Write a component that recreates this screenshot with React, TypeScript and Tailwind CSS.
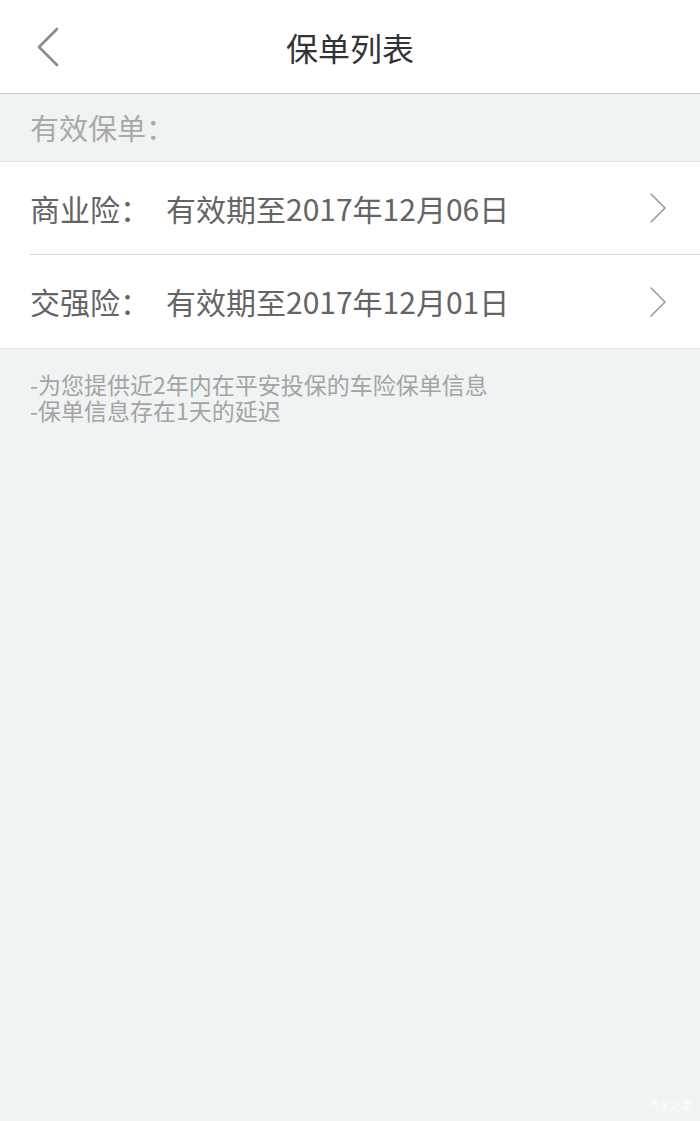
const policies = [
  { name: '商业险', until: '有效期至2017年12月06日' },
  { name: '交强险', until: '有效期至2017年12月01日' },
]

function BackArrow() {
  return (
    <svg width="24" height="40" viewBox="0 0 24 40" fill="none">
      <path d="M21 2 L3 20 L21 38" stroke="#8a8a8a" strokeWidth="2.6" strokeLinecap="round" strokeLinejoin="round" />
    </svg>
  )
}

function RowArrow() {
  return (
    <svg width="18" height="32" viewBox="0 0 18 32" fill="none">
      <path d="M2 2 L16 16 L2 30" stroke="#9a9a9a" strokeWidth="1.6" strokeLinecap="round" strokeLinejoin="round" />
    </svg>
  )
}

export default function App() {
  return (
    <div
      className="relative min-h-[1121px] w-full bg-[#eff3f4]"
      style={{ fontFamily: '"Noto Sans CJK SC", "Noto Sans", sans-serif' }}
    >
      <div className="relative flex h-[94px] items-center justify-center border-b border-[#cfcfcf] bg-white">
        <div className="absolute left-[36px] top-[27px]">
          <BackArrow />
        </div>
        <h1 className="text-[32px] leading-none text-[#333333]">保单列表</h1>
      </div>

      <div className="flex h-[68px] items-center border-b border-[#e2e6e7] px-[30px] text-[29px] text-[#a9a9a9]">
        有效保单：
      </div>

      <div className="border-b border-[#e2e6e7] bg-white">
        {policies.map((p, i) => (
          <div key={p.name} className="pl-[30px]">
            <div
              className={
                'flex h-[93px] items-center pr-[33px] ' +
                (i < policies.length - 1 ? 'border-b border-[#d6d6d6]' : '')
              }
            >
              <span className="w-[136px] text-[30px] text-[#646464]">{p.name}：</span>
              <span className="flex-1 text-[30px] text-[#646464]">{p.until}</span>
              <RowArrow />
            </div>
          </div>
        ))}
      </div>

      <div className="flex flex-col px-[30px] pt-[24px] text-[23px] leading-[26px] text-[#a3a3a3]">
        <p className="h-[26px] leading-[22px]">-为您提供近2年内在平安投保的车险保单信息</p>
        <p className="h-[26px] leading-[22px]">-保单信息存在1天的延迟</p>
      </div>

      <div className="absolute bottom-[8px] right-[8px] text-[11px] text-white/80">汽车之家</div>
    </div>
  )
}
